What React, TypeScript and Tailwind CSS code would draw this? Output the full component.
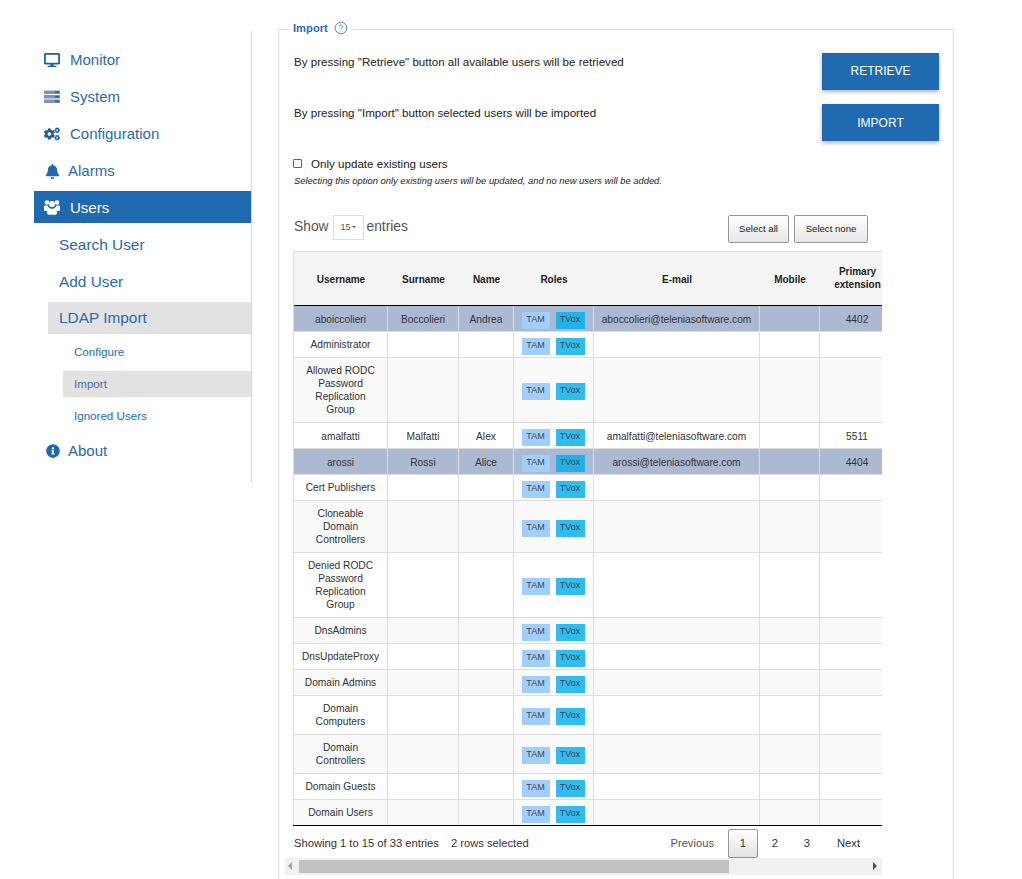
import { CircleHelp } from 'lucide-react';
import { FaBell, FaCogs, FaDesktop, FaInfoCircle } from 'react-icons/fa';

interface UserRow {
  username: string[];
  surname?: string;
  name?: string;
  email?: string;
  ext?: string;
  selected?: boolean;
}

const rows: UserRow[] = [
  { username: ['aboiccolieri'], surname: 'Boccolieri', name: 'Andrea', email: 'aboccolieri@teleniasoftware.com', ext: '4402', selected: true },
  { username: ['Administrator'] },
  { username: ['Allowed RODC', 'Password', 'Replication', 'Group'] },
  { username: ['amalfatti'], surname: 'Malfatti', name: 'Alex', email: 'amalfatti@teleniasoftware.com', ext: '5511' },
  { username: ['arossi'], surname: 'Rossi', name: 'Alice', email: 'arossi@teleniasoftware.com', ext: '4404', selected: true },
  { username: ['Cert Publishers'] },
  { username: ['Cloneable', 'Domain', 'Controllers'] },
  { username: ['Denied RODC', 'Password', 'Replication', 'Group'] },
  { username: ['DnsAdmins'] },
  { username: ['DnsUpdateProxy'] },
  { username: ['Domain Admins'] },
  { username: ['Domain', 'Computers'] },
  { username: ['Domain', 'Controllers'] },
  { username: ['Domain Guests'] },
  { username: ['Domain Users'] },
];

const rowColor = (row: UserRow, i: number) => {
  if (row.selected) return 'bg-[#abb9d3]';
  return i % 2 === 0 ? 'bg-[#f9f9f9]' : 'bg-white';
};

const cell = 'border-r border-b border-[#dddddd] px-0 py-[6px] text-center align-middle';
const dataCell = 'border-r border-b border-[#dddddd] px-0 pt-[7px] pb-[5px] text-center align-middle';
const headBase = 'border-b border-t border-[#dddddd] border-b-black bg-[#f4f4f4] px-0 text-center align-middle font-bold text-[10px] text-[#222222]';
const head = headBase + ' pt-[2px]';

function ServerIcon() {
  return (
    <svg viewBox="0 0 16 14" className="h-[14px] w-[16px]">
      <rect x="0" y="0.5" width="16" height="3.5" fill="#7f93b5" />
      <rect x="0" y="5" width="16" height="3.5" fill="#7f93b5" />
      <rect x="0" y="9.5" width="16" height="3.5" fill="#7f93b5" />
      <rect x="11" y="1.5" width="4" height="1.5" fill="#1e5f9f" />
      <rect x="11" y="6" width="4" height="1.5" fill="#1e5f9f" />
      <rect x="11" y="10.5" width="4" height="1.5" fill="#1e5f9f" />
    </svg>
  );
}

function UsersIcon() {
  return (
    <svg viewBox="0 0 16 15" className="h-[15px] w-[16px]" fill="white">
      <circle cx="3" cy="2.5" r="2.3" />
      <circle cx="13" cy="2.5" r="2.3" />
      <circle cx="8" cy="4" r="3" />
      <path d="M0 6.5c0-.8.6-1 1-1h2.6c.2 1 .8 1.8 1.6 2.4C3.9 8.6 3.2 10 3.1 11H1c-.6 0-1-.4-1-1z" />
      <path d="M16 6.500c0-.8-.6-1-1-1h-2.600c-.2 1-.8 1.800-1.600 2.400 1.300.7 2 2.100 2.100 3.100H15c.6 0 1-.4 1-1z" />
      <path d="M5 7.800c.8.700 1.900 1.200 3 1.200s2.200-.5 3-1.200c1.200.3 1.900 1.700 1.900 3.200v2c0 1-.7 1.800-1.600 1.800H4.700c-.9 0-1.600-.8-1.600-1.800v-2c0-1.500.7-2.900 1.900-3.200z" />
    </svg>
  );
}

export default function App() {
  return (
    <div className="flex h-[879px] overflow-hidden bg-white font-['Liberation_Sans',Arial,sans-serif]">
      {/* Sidebar */}
      <nav className="ml-[34px] mt-[31px] h-[451px] w-[218px] shrink-0 border-r border-[#d9d9d9] pt-[13px] text-[15px] text-[#2a6aad]">
        <a className="flex h-8 items-center pl-[10px]">
          <FaDesktop className="h-[16px] w-[16px] text-[#1f5f9f]" />
          <span className="ml-[10px]">Monitor</span>
        </a>
        <a className="mt-[5px] flex h-8 items-center pl-[10px]">
          <ServerIcon />
          <span className="ml-[10px]">System</span>
        </a>
        <a className="mt-[5px] flex h-8 items-center pl-[10px]">
          <FaCogs className="h-[16px] w-[16px] text-[#1f5f9f]" />
          <span className="ml-[10px]">Configuration</span>
        </a>
        <a className="mt-[5px] flex h-8 items-center pl-[11px]">
          <FaBell className="h-[15px] w-[15px] text-[#1e69b0]" />
          <span className="ml-[8px]">Alarms</span>
        </a>
        <a className="mt-[4px] flex h-8 w-[217px] items-center bg-[#1e69b0] pl-[10px] text-white">
          <UsersIcon />
          <span className="ml-[10px] pt-[2px]">Users</span>
        </a>
        <a className="ml-[25px] mt-[6px] flex h-8 items-center text-[15.4px]">Search User</a>
        <a className="ml-[25px] mt-[5px] flex h-8 items-center text-[15.4px]">Add User</a>
        <a className="ml-[14px] mt-[4px] flex h-8 items-center bg-[#e2e2e2] pl-[11px] text-[15.4px]">LDAP Import</a>
        <a className="ml-[40px] mt-[5px] flex h-[26px] items-center text-[11.6px]">Configure</a>
        <a className="ml-[29px] mt-[6px] flex h-[26px] items-center bg-[#e2e2e2] pl-[11px] text-[11.6px] text-[#4f6f9f]">Import</a>
        <a className="ml-[40px] mt-[6px] flex h-[26px] items-center text-[11.6px]">Ignored Users</a>
        <a className="mt-[6px] flex h-8 items-center pl-[12px]">
          <FaInfoCircle className="h-[14px] w-[14px] text-[#1e69b0]" />
          <span className="ml-[8px]">About</span>
        </a>
      </nav>

      {/* Main */}
      <main className="ml-[26px] mt-[20px] w-[676px] shrink-0">
        <fieldset className="h-[900px] border border-[#dddddd] px-[14px]">
          <legend className="-ml-[3px] flex items-center pb-[2px] pl-[3px] pr-[2px] text-[11.2px] font-bold text-[#2a6aad]">
            Import
            <CircleHelp className="ml-[6px] h-[14px] w-[14px] text-[#3a86b5]" strokeWidth={1.5} />
          </legend>

          <div className="mt-[14px] flex h-[37px] justify-between">
            <p className="pl-[1px] pt-[2px] text-[11.6px] leading-[14px] text-[#222222]">By pressing "Retrieve" button all available users will be retrieved</p>
            <button className="h-[37px] w-[117px] bg-[#1e69b0] text-[12px] font-medium text-white shadow-[0_2px_4px_rgba(0,0,0,0.3)]">RETRIEVE</button>
          </div>
          <div className="mt-[14px] flex h-[37px] justify-between">
            <p className="pl-[1px] pt-[2px] text-[11.6px] leading-[14px] text-[#222222]">By pressing "Import" button selected users will be imported</p>
            <button className="h-[37px] w-[117px] bg-[#1e69b0] pt-[1px] text-[12px] font-medium text-white shadow-[0_2px_4px_rgba(0,0,0,0.3)]">IMPORT</button>
          </div>

          <label className="mt-[16px] flex h-[14px] items-center text-[11.6px] text-[#222222]">
            <input type="checkbox" className="m-0 h-[9px] w-[9px] appearance-none rounded-[1px] border border-[#666666] bg-white" />
            <span className="ml-[9px]">Only update existing users</span>
          </label>
          <p className="mt-[4px] pl-[1px] text-[9.4px] italic leading-[12px] text-[#222222]">Selecting this option only existing users will be updated, and no new users will be added.</p>

          <div className="-ml-[8px] w-[597px]">
            <div className="ml-[8px] mt-[28px] flex h-[28px] items-start justify-between pr-[14px]">
              <div className="flex items-center pl-[1px] text-[13.8px] text-[#555555]">
                <span>Show</span>
                <span className="ml-[4px] mr-[3px] flex h-[25px] w-[31px] items-center justify-center border border-[#dddddd] text-[9px]">
                  15
                  <span className="ml-[1px] h-0 w-0 border-x-[2px] border-t-[2px] border-x-transparent border-t-[#555555]" />
                </span>
                <span>entries</span>
              </div>
              <div className="flex gap-[5px]">
                <button className="h-[28px] w-[61px] rounded-[2px] border border-[#979797] bg-gradient-to-b from-white to-[#e6e6e6] text-[9.6px] text-[#222222]">Select all</button>
                <button className="h-[28px] w-[74px] rounded-[2px] border border-[#979797] bg-gradient-to-b from-white to-[#e6e6e6] text-[9.6px] text-[#222222]">Select none</button>
              </div>
            </div>

            <div className="ml-[8px] mt-[8px] overflow-hidden">
              <table className="w-[602px] table-fixed border-separate border-spacing-0 border-l border-[#dddddd] text-[10.2px] leading-[13px]">
                <colgroup>
                  <col className="w-[94px]" />
                  <col className="w-[71px]" />
                  <col className="w-[55px]" />
                  <col className="w-[80px]" />
                  <col className="w-[166px]" />
                  <col className="w-[60px]" />
                  <col className="w-[75px]" />
                </colgroup>
                <thead>
                  <tr className="h-[55px]">
                    <th className={head}>Username</th>
                    <th className={head}>Surname</th>
                    <th className={head}>Name</th>
                    <th className={head}>Roles</th>
                    <th className={head}>E-mail</th>
                    <th className={head}>Mobile</th>
                    <th className={headBase}>Primary<br />extension</th>
                  </tr>
                </thead>
                <tbody>
                  {rows.map((row, i) => {
                    const td = row.surname ? dataCell : cell;
                    return (
                      <tr key={row.username.join(' ')} className={rowColor(row, i) + ' text-[#333333]'}>
                        <td className={td}>
                          {row.username.map((line) => (
                            <div key={line}>{line}</div>
                          ))}
                        </td>
                        <td className={td}>{row.surname}</td>
                        <td className={td}>{row.name}</td>
                        <td className="border-r border-b border-[#dddddd] p-0 align-middle">
                          <div className="flex justify-center gap-[6px] pr-[1px] pt-[4px] text-[9px] leading-[15px] text-[#444444]">
                            <span className="h-[17px] w-[28px] bg-[#a0cfff] text-center">TAM</span>
                            <span className={(row.selected ? 'bg-[#1fb1e8]' : 'bg-[#2fbcf0]') + ' h-[17px] w-[29px] text-center'}>TVox</span>
                          </div>
                        </td>
                        <td className={td}>{row.email}</td>
                        <td className={td}></td>
                        <td className={td}>{row.ext}</td>
                      </tr>
                    );
                  })}
                </tbody>
              </table>
              <div className="h-[1px] -mt-[1px] relative bg-black" />
            </div>

            <div className="ml-[8px] flex h-[32px] items-start justify-between text-[11.2px]">
              <div className="ml-[1px] mt-[11px] leading-[13px] text-[#333333]">
                Showing 1 to 15 of 33 entries<span className="ml-[12px]">2 rows selected</span>
              </div>
              <div className="mt-[3px] flex items-center text-[#555555]">
                <span className="mr-[14px]">Previous</span>
                <span className="flex h-[29px] w-[30px] items-center justify-center rounded-[2px] border border-[#979797] bg-gradient-to-b from-white to-[#e2e2e2] text-[#333333]">1</span>
                <span className="w-[34px] text-center text-[#333333]">2</span>
                <span className="w-[30px] text-center text-[#333333]">3</span>
                <span className="ml-[15px] mr-[22px] text-[#333333]">Next</span>
              </div>
            </div>

            <div className="flex h-[17px] items-center justify-between bg-[#f1f1f1] px-[3px]">
              <span className="h-0 w-0 border-y-[4px] border-r-[4px] border-y-transparent border-r-[#a3a3a3]" />
              <span className="ml-[7px] h-[13px] w-[430px] bg-[#c1c1c1]" />
              <span className="ml-auto mr-[2px] h-0 w-0 border-y-[4px] border-l-[4px] border-y-transparent border-l-[#505050]" />
            </div>
          </div>
        </fieldset>
      </main>
    </div>
  );
}
